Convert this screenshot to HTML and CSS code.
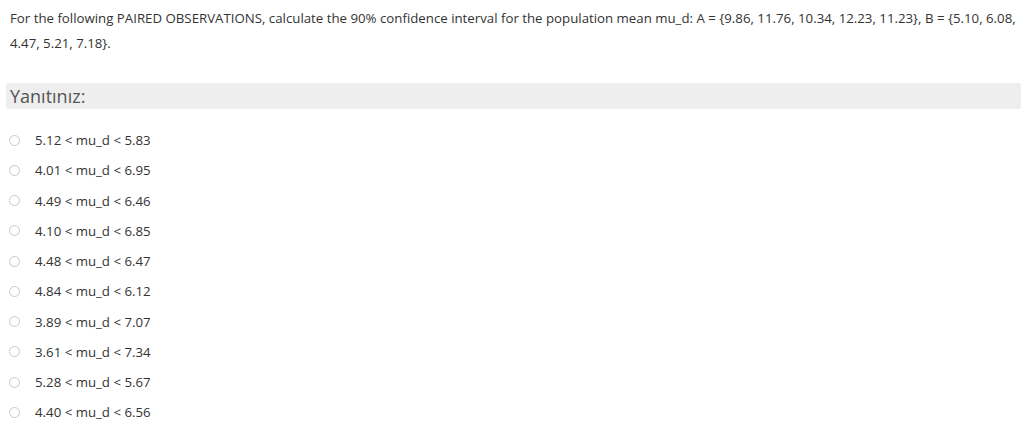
FILE: index.html
```html
<!DOCTYPE html>
<html>
<head>
<meta charset="utf-8">
<link rel="stylesheet" href="styles.css">
</head>
<body>
<div class="question">
  <p class="qtext">For the following PAIRED OBSERVATIONS, calculate the 90% confidence interval for the population mean mu_d: A = {9.86, 11.76, 10.34, 12.23, 11.23}, B = {5.10, 6.08, 4.47, 5.21, 7.18}.</p>
  <div class="prompt">Yanıtınız:</div>
  <ul class="answers">
    <li><span class="radio"></span><span>5.12 &lt; mu_d &lt; 5.83</span></li>
    <li><span class="radio"></span><span>4.01 &lt; mu_d &lt; 6.95</span></li>
    <li><span class="radio"></span><span>4.49 &lt; mu_d &lt; 6.46</span></li>
    <li><span class="radio"></span><span>4.10 &lt; mu_d &lt; 6.85</span></li>
    <li><span class="radio"></span><span>4.48 &lt; mu_d &lt; 6.47</span></li>
    <li><span class="radio"></span><span>4.84 &lt; mu_d &lt; 6.12</span></li>
    <li><span class="radio"></span><span>3.89 &lt; mu_d &lt; 7.07</span></li>
    <li><span class="radio"></span><span>3.61 &lt; mu_d &lt; 7.34</span></li>
    <li><span class="radio"></span><span>5.28 &lt; mu_d &lt; 5.67</span></li>
    <li><span class="radio"></span><span>4.40 &lt; mu_d &lt; 6.56</span></li>
  </ul>
</div>
</body>
</html>
```
FILE: styles.css
```css
html, body {
  margin: 0;
  padding: 0;
  background: #fff;
}
body {
  font-family: "Open Sans", "Liberation Sans", sans-serif;
  color: #333;
  font-size: 13.25px;
}
.question {
  padding: 6px 3px 0 6px;
}
.qtext {
  margin: 0 0 0 4px;
  line-height: 24.5px;
}
.prompt {
  margin-top: 28px;
  background: #eeeeee;
  border-radius: 3px;
  height: 26px;
  line-height: 26px;
  font-size: 18px;
  color: #555;
  padding-left: 4px;
}
.answers {
  list-style: none;
  margin: 16px 0 0 0;
  padding: 0;
}
.answers li {
  display: flex;
  align-items: center;
  height: 30.25px;
}
.radio {
  width: 9px;
  height: 9px;
  border: 1px solid #c8c8c8;
  border-radius: 50%;
  margin-left: 3px;
  margin-right: 15px;
  box-sizing: content-box;
}
```
